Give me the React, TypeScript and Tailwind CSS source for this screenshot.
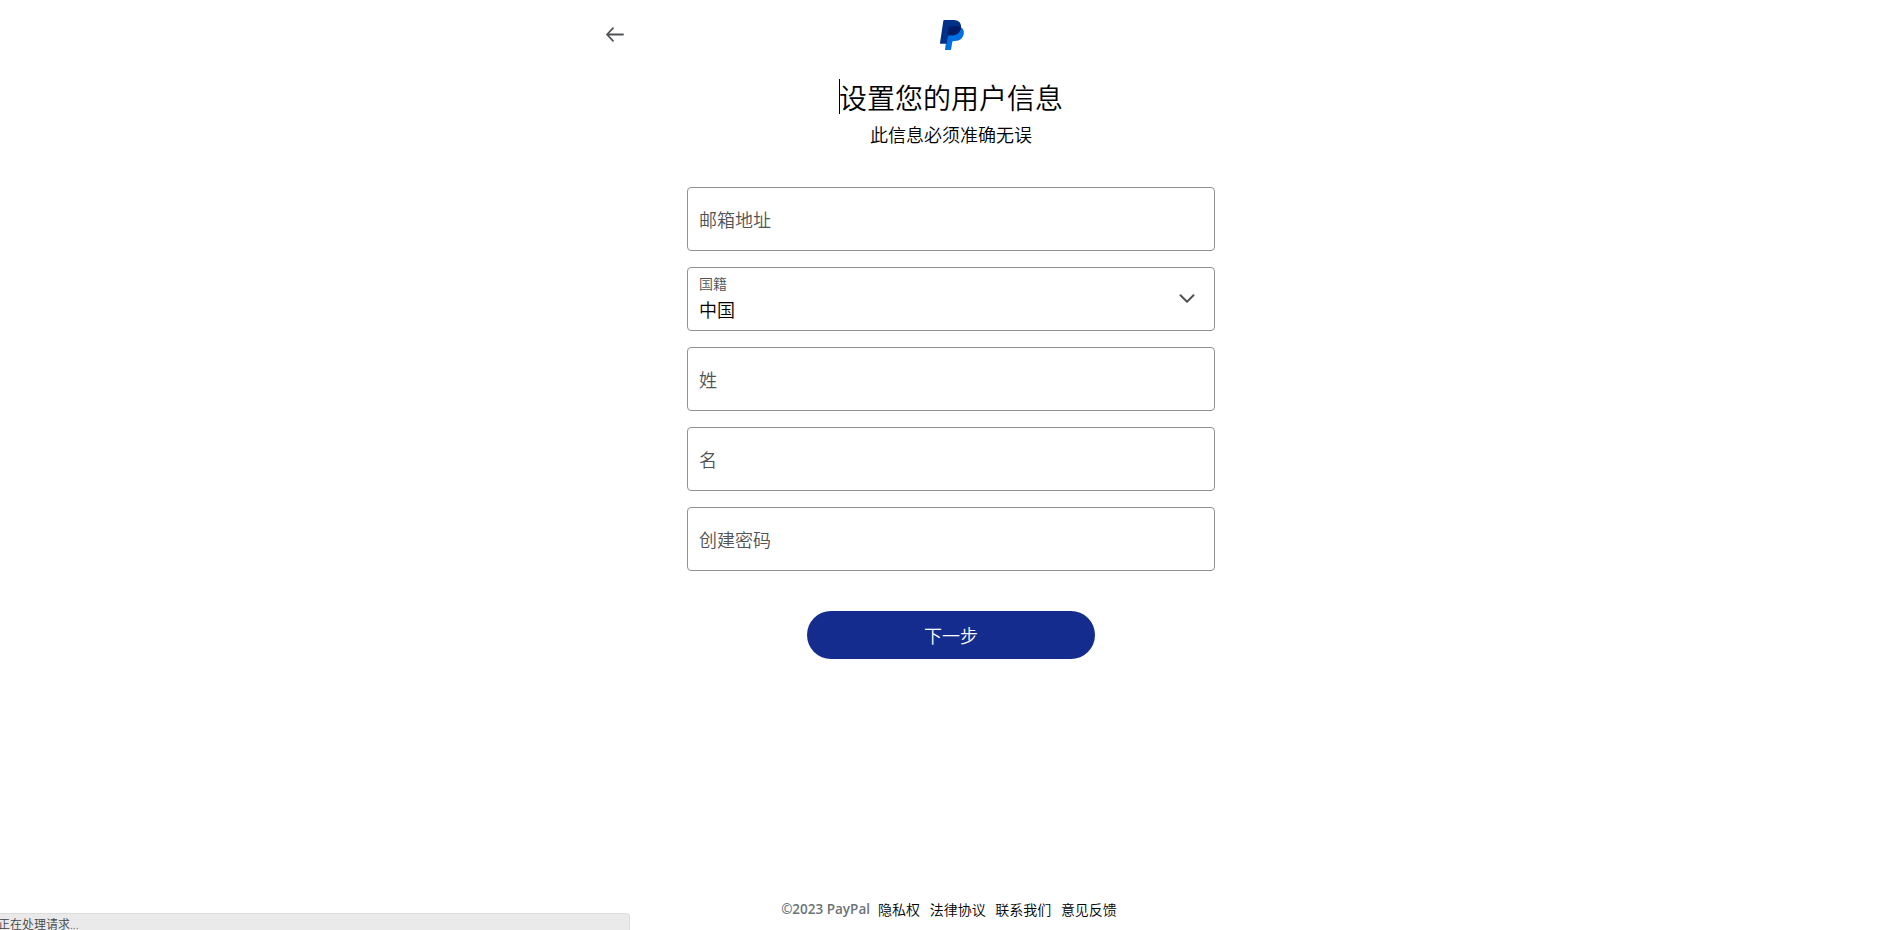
const FONT = "font-['Noto_Sans_CJK_SC',sans-serif]";

const PayPalLogo = () => (
  <svg className="h-[30px] w-6" viewBox="0 0 24 30" fill="none" aria-label="PayPal">
    <path fill="#0070e0" d="M20.900 7.200c2.500 1.400 3.400 3.900 2.800 6.900-1 4.700-4.100 6.900-8.700 6.900h-1.600c-.6 0-1 .4-1.100 1l-1.100 7c-.1.600-.5 1-1.100 1H5.500c-.4 0-.6-.3-.5-.7L8.200 8.500z" />
    <path fill="#003087" d="M4.600 0h9.200c4.600 0 7.800 2.900 7.200 7.500-.8 5.300-4.200 7.800-9.300 7.800H9.100c-.7 0-1.200.5-1.300 1.100L6.600 23.700H.6c-.4 0-.6-.3-.6-.7L3.300 1C3.400.4 3.900 0 4.600 0z" />
    <path fill="#001c64" d="M8.200 8.200c.2-1.200 1-1.900 2.200-1.900h6.400c1.700 0 3 .3 4.200 1-.8 5.400-4.200 8-9.300 8H9.100c-.7 0-1.200.5-1.300 1.100l-.5 3z" />
  </svg>
);

const Field = ({ label }: { label: string }) => (
  <div className="flex h-16 items-center rounded border border-[#909191] px-[11px] pb-px text-lg leading-6 text-[#515354]">
    {label}
  </div>
);

const links = ["隐私权", "法律协议", "联系我们", "意见反馈"];

const App = () => {
  return (
    <div className={`relative flex h-screen flex-col items-center overflow-hidden bg-white pl-3 font-[350] text-black ${FONT}`}>
      <header className="flex w-[690px] items-start pt-5">
        <svg className="mt-[7px] h-[15px] w-[18px]" viewBox="0 0 18 15" fill="none" stroke="#515354" strokeWidth="1.8" strokeLinecap="round" strokeLinejoin="round">
          <path d="M17 7.500H1M7 1.200L1 7.500l6 6.300" />
        </svg>
        <div className="flex flex-1 justify-center pr-[17px]">
          <PayPalLogo />
        </div>
      </header>

      <main className="flex flex-col items-center">
        <h1 className="relative mt-[29px] h-9 text-[28px] leading-9">
          <span className="absolute top-0 left-0 h-[35px] w-px bg-black" />
          设置您的用户信息
        </h1>
        <p className="mt-2 text-lg leading-[23px]">此信息必须准确无误</p>

        <form className="mt-[41px] flex w-[528px] flex-col gap-4">
          <Field label="邮箱地址" />
          <div className="flex h-16 items-center justify-between rounded border border-[#909191] pr-[19px] pb-px pl-[11px]">
            <div className="flex flex-col">
              <span className="text-sm leading-5 text-[#515354]">国籍</span>
              <span className="text-lg leading-8">中国</span>
            </div>
            <svg className="h-[9px] w-4" viewBox="0 0 16 9" fill="none" stroke="#515354" strokeWidth="2" strokeLinecap="round" strokeLinejoin="round">
              <path d="M1.500 1.200L8 7.700l6.500-6.500" />
            </svg>
          </div>
          <Field label="姓" />
          <Field label="名" />
          <Field label="创建密码" />
        </form>

        <button type="button" className="mt-10 h-12 w-72 rounded-full bg-[#142c8e] pb-px text-lg leading-6 text-white">
          下一步
        </button>
      </main>

      <footer className="mt-auto mr-[4px] mb-[11px] flex gap-[9.6px] text-sm leading-5">
        <span className="-mr-[1.500px] font-['Open_Sans',sans-serif] text-[13.5px] leading-5 font-semibold text-[#6c7378]">©2023 PayPal</span>
        {links.map((link) => (
          <a key={link} href="#">{link}</a>
        ))}
      </footer>

      {/* browser status bubble */}
      <div className="absolute bottom-0 left-0 h-[17px] w-[630px] rounded-tr border-t border-r border-[#dcdcdc] bg-[#eaeaea]">
        <span className="-ml-[2px] block font-['Open_Sans','Noto_Sans_CJK_SC',sans-serif] text-xs leading-[22px] text-[#444]">正在处理请求...</span>
      </div>
    </div>
  );
};

export default App;
